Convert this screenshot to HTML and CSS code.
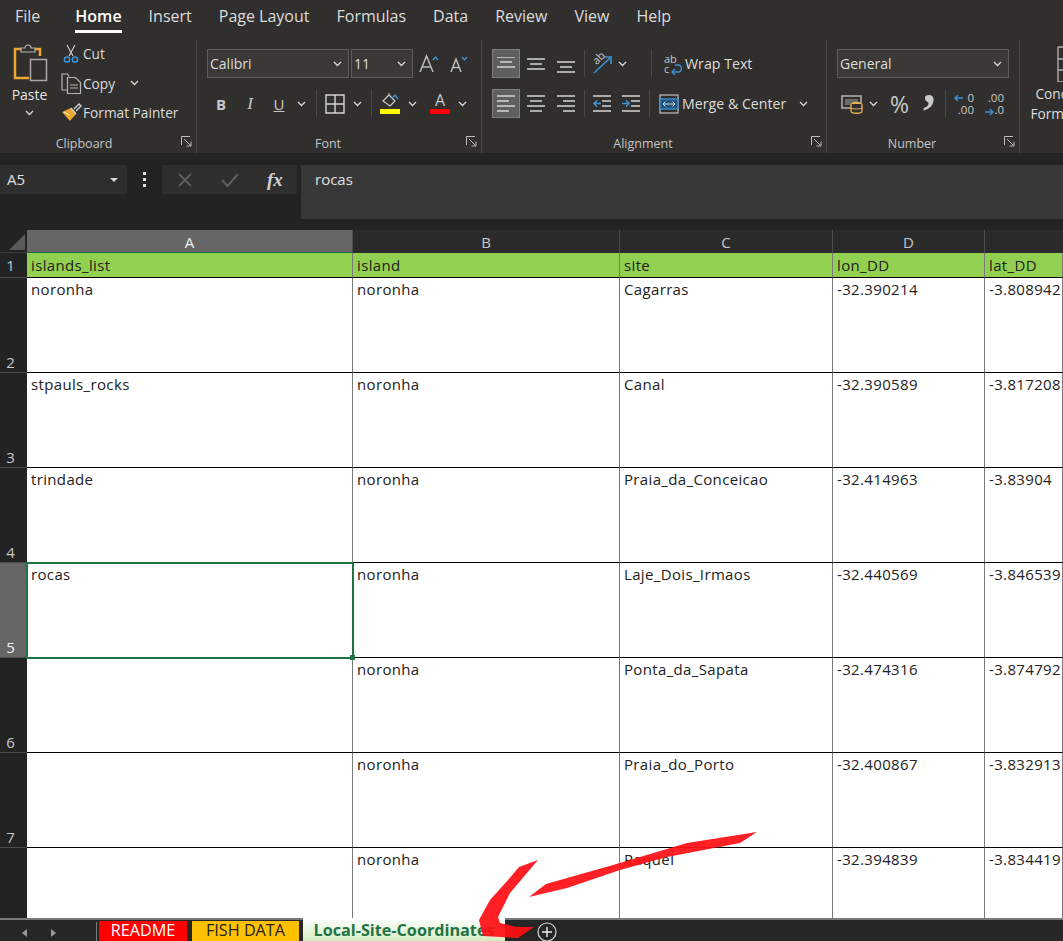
FILE: index.html
```html
<!DOCTYPE html>
<html lang="en">
<head>
    <meta charset="UTF-8">
    <title>Local-Site-Coordinates - Excel</title>
    <link rel="stylesheet" href="styles.css">
</head>
<body>
<svg class="sprite" width="0" height="0">
    <symbol id="chev" viewBox="0 0 9 6"><path d="M1 1l3.5 3.5L8 1" fill="none" stroke="#d8d8d8" stroke-width="1.3"/></symbol>
    <symbol id="launcher" viewBox="0 0 11 11"><path d="M.5 9V.5H9M3 3l6.5 6.5M5.5 10H10V5.500" fill="none" stroke="#bdbdbd" stroke-width="1"/></symbol>
</svg>

<div class="tabs">
    <span class="tab">File</span>
    <span class="tab tab-home">Home</span>
    <span class="tab">Insert</span>
    <span class="tab">Page Layout</span>
    <span class="tab">Formulas</span>
    <span class="tab">Data</span>
    <span class="tab">Review</span>
    <span class="tab">View</span>
    <span class="tab">Help</span>
</div>

<div class="ribbon">
    <div class="group group-clipboard">
        <div class="group-body clip-body">
            <div class="paste">
                <svg width="36" height="38" viewBox="0 0 36 38"><path d="M8 5H2v29h14" fill="none" stroke="#eda731" stroke-width="2.500"/><path d="M22 5h5v7" fill="none" stroke="#eda731" stroke-width="2.500"/><path d="M8 8V4h4a3 3 0 0 1 6 0h4v4z" fill="#302f2e" stroke="#b5b5b5" stroke-width="1.200"/><rect x="17.500" y="15.500" width="16" height="21" fill="#302f2e" stroke="#a8a8a8" stroke-width="1.500"/></svg>
                <span>Paste</span>
                <svg class="chev" width="9" height="6"><use href="#chev"/></svg>
            </div>
            <div class="clip-list">
                <div class="clip-item">
                    <span class="clip-icon"><svg width="16" height="20" viewBox="0 0 16 20"><path d="M4 1l6 11M12 1L6 12" stroke="#c8c8c8" stroke-width="1.200" fill="none"/><circle cx="4" cy="15.500" r="2.600" fill="none" stroke="#3d94d6" stroke-width="1.500"/><circle cx="12" cy="15.500" r="2.600" fill="none" stroke="#3d94d6" stroke-width="1.500"/></svg></span>
                    <span>Cut</span>
                </div>
                <div class="clip-item">
                    <span class="clip-icon"><svg width="21" height="21" viewBox="0 0 21 21"><path d="M8 3.500L6.500 1H1v16h5" fill="none" stroke="#b5b5b5" stroke-width="1.200"/><path d="M6.500 4.500h8l5 5v11h-13z" fill="#302f2e" stroke="#b5b5b5" stroke-width="1.200"/><path d="M9 12h8M9 15h8" stroke="#b5b5b5"/></svg></span>
                    <span>Copy</span>
                    <svg class="chev clip-chev" width="9" height="6"><use href="#chev"/></svg>
                </div>
                <div class="clip-item">
                    <span class="clip-icon"><svg width="21" height="19" viewBox="0 0 21 19"><path d="M1 9l9-4 5 6-6 7z" fill="#eda731"/><path d="M10 5l5 6M13 6l5-5 2 2-5 5" fill="none" stroke="#d5d5d5" stroke-width="1.300"/><path d="M3 9l5 3" stroke="#fff2cf"/></svg></span>
                    <span>Format Painter</span>
                </div>
            </div>
        </div>
        <div class="group-label">Clipboard<svg class="launcher" width="11" height="11"><use href="#launcher"/></svg></div>
    </div>

    <div class="group group-font">
        <div class="group-body">
            <div class="tool-row">
                <div class="select select-font">Calibri<svg class="chev" width="9" height="6"><use href="#chev"/></svg></div>
                <div class="select select-size">11<svg class="chev" width="9" height="6"><use href="#chev"/></svg></div>
                <svg class="grow" width="20" height="20" viewBox="0 0 20 20"><path d="M1 18L7.500 2 14 18M3.500 13h8" fill="none" stroke="#bdbdbd" stroke-width="1.500"/><path d="M14 6l2.500-3L19 6" fill="none" stroke="#3d94d6" stroke-width="1.400"/></svg>
                <svg class="shrink" width="18" height="18" viewBox="0 0 18 18"><path d="M1 17L6 4l5 13M3 12.500h6" fill="none" stroke="#bdbdbd" stroke-width="1.500"/><path d="M12 2l2.500 3L17 2" fill="none" stroke="#3d94d6" stroke-width="1.400"/></svg>
            </div>
            <div class="tool-row font-row2">
                <span class="glyph-b">B</span>
                <span class="glyph-i">I</span>
                <span class="glyph-u">U</span>
                <svg class="chev chev-u" width="9" height="6"><use href="#chev"/></svg>
                <i class="vsep sep-a"></i>
                <svg class="borders" width="20" height="20" viewBox="0 0 20 20"><path d="M1 1h18v18H1zM10 1v18M1 10h18" fill="none" stroke="#d5d5d5" stroke-width="1.400"/></svg>
                <svg class="chev chev-b" width="9" height="6"><use href="#chev"/></svg>
                <i class="vsep sep-b"></i>
                <span class="fill-btn">
                    <svg width="20" height="15" viewBox="0 0 20 15"><path d="M3 8l6-6 6 6-5 5z" fill="none" stroke="#c8c8c8" stroke-width="1.300"/><path d="M9 2V0" stroke="#c8c8c8"/><path d="M12 5l3-3 3 4" fill="none" stroke="#3d94d6" stroke-width="1.300"/></svg>
                    <i class="swatch swatch-yellow"></i>
                </span>
                <svg class="chev chev-f" width="9" height="6"><use href="#chev"/></svg>
                <span class="color-btn">
                    <span class="glyph-a">A</span>
                    <i class="swatch swatch-red"></i>
                </span>
                <svg class="chev chev-c" width="9" height="6"><use href="#chev"/></svg>
            </div>
        </div>
        <div class="group-label">Font<svg class="launcher" width="11" height="11"><use href="#launcher"/></svg></div>
    </div>

    <div class="group group-align">
        <div class="group-body">
            <div class="tool-row">
                <span class="align-btn active"><svg width="18" height="14" viewBox="0 0 18 14"><path d="M0 1h18M3 6h12M0 11h18" stroke="#d5d5d5" stroke-width="1.500" transform="translate(0 -1)"/></svg></span>
                <span class="align-btn"><svg width="18" height="14" viewBox="0 0 18 14"><path d="M0 2h18M3 7h12M0 12h18" stroke="#d5d5d5" stroke-width="1.500"/></svg></span>
                <span class="align-btn"><svg class="push-down" width="18" height="14" viewBox="0 0 18 14"><path d="M0 2h18M3 7h12M0 12h18" stroke="#d5d5d5" stroke-width="1.500"/></svg></span>
                <i class="vsep sep-c"></i>
                <span class="orient">
                    <span class="orient-text">ab</span>
                    <svg width="22" height="23" viewBox="0 0 22 23"><path d="M2 21L18 6" stroke="#3d94d6" stroke-width="1.600"/><path d="M12 5h7v7" fill="none" stroke="#3d94d6" stroke-width="1.600"/></svg>
                </span>
                <svg class="chev chev-o" width="9" height="6"><use href="#chev"/></svg>
                <i class="vsep sep-d"></i>
                <span class="wrap-icon">
                    <span class="wrap-letters">ab<br>c</span>
                    <svg width="12" height="14" viewBox="0 0 12 14"><path d="M2 10h6a3 3 0 0 0 0-7H5" fill="none" stroke="#3d94d6" stroke-width="1.500"/><path d="M5 7l-3 3 3 3" fill="none" stroke="#3d94d6" stroke-width="1.300"/></svg>
                </span>
                <span class="tool-text">Wrap Text</span>
            </div>
            <div class="tool-row align-row2">
                <span class="align-btn active"><svg width="18" height="17" viewBox="0 0 18 17"><path d="M0 1h18M0 6h12M0 11h18M0 16h12" stroke="#d5d5d5" stroke-width="1.500"/></svg></span>
                <span class="align-btn"><svg width="18" height="17" viewBox="0 0 18 17"><path d="M0 1h18M3 6h12M0 11h18M3 16h12" stroke="#d5d5d5" stroke-width="1.500"/></svg></span>
                <span class="align-btn"><svg width="18" height="17" viewBox="0 0 18 17"><path d="M0 1h18M6 6h12M0 11h18M6 16h12" stroke="#d5d5d5" stroke-width="1.500"/></svg></span>
                <i class="vsep sep-c"></i>
                <svg class="indent" width="18" height="17" viewBox="0 0 18 17"><path d="M0 1h18M9 6h9M9 11h9M0 16h18" stroke="#d5d5d5" stroke-width="1.400"/><path d="M8 8.500H1M4 5.500l-3 3 3 3" fill="none" stroke="#3d94d6" stroke-width="1.500"/></svg>
                <svg class="indent indent-b" width="18" height="17" viewBox="0 0 18 17"><path d="M0 1h18M9 6h9M9 11h9M0 16h18" stroke="#d5d5d5" stroke-width="1.400"/><path d="M0 8.500h7M4 5.500l3 3-3 3" fill="none" stroke="#3d94d6" stroke-width="1.500"/></svg>
                <i class="vsep sep-e"></i>
                <svg class="merge-icon" width="20" height="20" viewBox="0 0 20 20"><rect x="1" y="1" width="18" height="18" fill="none" stroke="#b5b5b5" stroke-width="1.300"/><rect x="1" y="5" width="18" height="10" fill="#24507a" stroke="#3d94d6" stroke-width="1.300"/><path d="M4 10h12M6.500 7.500L4 10l2.500 2.500M13.500 7.500L16 10l-2.500 2.500" fill="none" stroke="#cfe4f5"/></svg>
                <span class="tool-text">Merge &amp; Center</span>
                <svg class="chev chev-m" width="9" height="6"><use href="#chev"/></svg>
            </div>
        </div>
        <div class="group-label">Alignment<svg class="launcher" width="11" height="11"><use href="#launcher"/></svg></div>
    </div>

    <div class="group group-number">
        <div class="group-body">
            <div class="tool-row">
                <div class="select select-num">General<svg class="chev" width="9" height="6"><use href="#chev"/></svg></div>
            </div>
            <div class="tool-row num-row2">
                <svg class="money" width="22" height="20" viewBox="0 0 22 20"><rect x="1" y="2" width="19" height="12" fill="none" stroke="#b5b5b5" stroke-width="1.500"/><path d="M4 5h13v6H4z" fill="#6a6a6a"/><ellipse cx="15.500" cy="10" rx="5.500" ry="2.200" fill="#e8b454"/><path d="M10 10v7c0 3 11 3 11 0v-7" fill="#302f2e" stroke="#e8b454" stroke-width="1.300"/><path d="M10 13.500c0 2 11 2 11 0" fill="none" stroke="#e8b454"/></svg>
                <svg class="chev chev-n" width="9" height="6"><use href="#chev"/></svg>
                <span class="glyph-pct">%</span>
                <span class="glyph-comma">,</span>
                <i class="vsep sep-f"></i>
                <span class="dec-icon">
                    <span class="dec-line dec-end">0</span>
                    <span class="dec-line dec-end">.00</span>
                    <svg class="dec-arrow dec-arrow-top" width="10" height="8" viewBox="0 0 10 8"><path d="M9 4H1M4 1L1 4l3 3" fill="none" stroke="#3d94d6" stroke-width="1.400"/></svg>
                </span>
                <span class="dec-icon dec-b">
                    <span class="dec-line dec-end">.00</span>
                    <span class="dec-line dec-end">.0</span>
                    <svg class="dec-arrow dec-arrow-bottom" width="10" height="8" viewBox="0 0 10 8"><path d="M1 4h8M6 1l3 3-3 3" fill="none" stroke="#3d94d6" stroke-width="1.400"/></svg>
                </span>
            </div>
        </div>
        <div class="group-label">Number<svg class="launcher" width="11" height="11"><use href="#launcher"/></svg></div>
    </div>

    <div class="group group-styles">
        <svg class="cond-icon" width="20" height="36" viewBox="0 0 20 36"><path d="M1 1h19M1 1v35h19M1 13h19M1 24h19M10 1v35" fill="none" stroke="#b5b5b5" stroke-width="1.300"/></svg>
        <div class="cond-text">Conditional<br>Formatting<svg class="chev cond-chev" width="9" height="6"><use href="#chev"/></svg></div>
    </div>
</div>

<div class="formula-bar">
    <div class="name-box">A5<i class="caret"></i></div>
    <div class="dots"><i></i><i></i><i></i></div>
    <div class="fx-buttons">
        <svg width="16" height="16" viewBox="0 0 16 16"><path d="M2 2l12 12M14 2L2 14" stroke="#5e5e5e" stroke-width="1.800"/></svg>
        <svg width="18" height="16" viewBox="0 0 18 16"><path d="M1 8l5.500 6L17 2" fill="none" stroke="#5e5e5e" stroke-width="2"/></svg>
        <span class="fx">fx</span>
    </div>
    <div class="formula-input">rocas</div>
</div>

<div class="sheet">
    <div class="corner"><i></i></div>
    <div class="col-head col-on">A</div>
    <div class="col-head">B</div>
    <div class="col-head">C</div>
    <div class="col-head">D</div>
    <div class="col-head col-last"></div>

    <div class="row-head head-top">1</div>
    <div class="cell title">islands_list</div>
    <div class="cell title">island</div>
    <div class="cell title">site</div>
    <div class="cell title">lon_DD</div>
    <div class="cell title">lat_DD</div>

    <div class="row-head">2</div>
    <div class="cell">noronha</div>
    <div class="cell">noronha</div>
    <div class="cell">Cagarras</div>
    <div class="cell">-32.390214</div>
    <div class="cell">-3.808942</div>

    <div class="row-head">3</div>
    <div class="cell">stpauls_rocks</div>
    <div class="cell">noronha</div>
    <div class="cell">Canal</div>
    <div class="cell">-32.390589</div>
    <div class="cell">-3.817208</div>

    <div class="row-head">4</div>
    <div class="cell">trindade</div>
    <div class="cell">noronha</div>
    <div class="cell">Praia_da_Conceicao</div>
    <div class="cell">-32.414963</div>
    <div class="cell">-3.83904</div>

    <div class="row-head row-on">5</div>
    <div class="cell cell-on">rocas</div>
    <div class="cell">noronha</div>
    <div class="cell">Laje_Dois_Irmaos</div>
    <div class="cell">-32.440569</div>
    <div class="cell">-3.846539</div>

    <div class="row-head">6</div>
    <div class="cell"></div>
    <div class="cell">noronha</div>
    <div class="cell">Ponta_da_Sapata</div>
    <div class="cell">-32.474316</div>
    <div class="cell">-3.874792</div>

    <div class="row-head">7</div>
    <div class="cell"></div>
    <div class="cell">noronha</div>
    <div class="cell">Praia_do_Porto</div>
    <div class="cell">-32.400867</div>
    <div class="cell">-3.832913</div>

    <div class="row-head"></div>
    <div class="cell"></div>
    <div class="cell">noronha</div>
    <div class="cell">Raquel</div>
    <div class="cell">-32.394839</div>
    <div class="cell">-3.834419</div>
</div>

<div class="sheet-tabs">
    <div class="nav-arrows"><i class="arrow-left"></i><i class="arrow-right"></i></div>
    <div class="sheet-tab tab-red">README</div>
    <div class="sheet-tab tab-gold">FISH DATA</div>
    <div class="sheet-tab tab-active">Local-Site-Coordinates</div>
    <div class="add-sheet">
        <svg width="20" height="20" viewBox="0 0 20 20"><circle cx="10" cy="10" r="9" fill="none" stroke="#d5d5d5" stroke-width="1.200"/><path d="M10 5v10M5 10h10" stroke="#eee" stroke-width="1.400"/></svg>
    </div>
</div>

<!-- hand drawn annotation on top of the screenshot -->
<svg class="annotation" width="1063" height="941" viewBox="0 0 1063 941">
    <path d="M529 897L546 884 613 865 687 843 757 832 740 843 667 857 620 870 567 888z"/>
    <path d="M538 860L519 867 508 880 490 900 479 920 483 936 518 938 534 927 517 927 500 923 498 917 510 893z"/>
</svg>
</body>
</html>
```

FILE: styles.css
```css
* {
    box-sizing: border-box;
}
html, body {
    height: 100%;
}
body {
    margin: 0;
    background-color: #302f2e;
    color: #e4e4e4;
    font-family: "Open Sans", "Noto Sans", sans-serif;
    font-size: 14px;
    display: flex;
    flex-direction: column;
    overflow: hidden;
    position: relative;
}
.sprite {
    position: absolute;
}
.chev {
    flex: none;
}

/* ribbon tabs */
.tabs {
    height: 33px;
    display: flex;
    gap: 27px;
    padding-left: 15px;
    flex: none;
}
.tab {
    font-size: 16px;
    line-height: 32px;
    color: #dcdcdc;
    white-space: nowrap;
}
.tab-home {
    margin-left: 8px;
    font-weight: 600;
    color: #fff;
    height: 33px;
    border-bottom: 3px solid #fff;
}

/* ribbon */
.ribbon {
    height: 120px;
    display: flex;
    flex: none;
}
.group {
    display: flex;
    flex-direction: column;
    border-right: 1px solid #484746;
    margin-top: 7px;
    flex: none;
    position: relative;
}
.group-clipboard { width: 197px; }
.group-font { width: 285px; padding-left: 10px; }
.group-align { width: 345px; padding-left: 10px; }
.group-number { width: 193px; padding-left: 10px; }
.group-styles { flex: 1; border-right: none; }
.group-body {
    flex: 1;
    padding-top: 9px;
}
.group-label {
    height: 20px;
    line-height: 22px;
    font-size: 12.5px;
    text-align: center;
    color: #c4c4c4;
    padding-right: 28px;
    position: relative;
}
.group-font .group-label,
.group-align .group-label,
.group-number .group-label {
    padding-right: 32px;
}
.launcher {
    position: absolute;
    right: 4px;
    top: 3px;
}
.clip-body {
    display: flex;
    padding-top: 4px;
}
.paste {
    width: 59px;
    display: flex;
    flex-direction: column;
    align-items: center;
}
.paste svg:first-child {
    margin-left: 3px;
}
.paste span {
    margin-top: 3px;
    line-height: 20px;
}
.paste .chev {
    margin-top: 5px;
}
.clip-list {
    display: flex;
    flex-direction: column;
    margin-top: -5px;
}
.clip-item {
    height: 29.500px;
    display: flex;
    align-items: center;
    white-space: nowrap;
    color: #dcdcdc;
    font-size: 13.7px;
}
.clip-icon {
    width: 24px;
    display: flex;
    justify-content: center;
}
.clip-chev {
    margin-left: 15px;
}

.tool-row {
    display: flex;
    align-items: center;
    height: 29px;
}
.font-row2, .align-row2, .num-row2 {
    margin-top: 11px;
}
.select {
    height: 29px;
    border: 1px solid #5c5c5c;
    background-color: #3a3938;
    color: #dcdcdc;
    padding: 0 6px 0 2px;
    display: flex;
    align-items: center;
    justify-content: space-between;
    font-size: 14px;
}
.select-font { width: 142px; }
.select-size { width: 62px; margin-left: 2px; }
.select-num { width: 172px; }
.grow { margin-left: 6px; }
.shrink { margin-left: 11px; }

.font-row2 span, .glyph-pct, .glyph-comma {
    color: #c8c8c8;
}
.glyph-b, .glyph-i, .glyph-u {
    width: 20px;
    text-align: center;
    font-size: 15px;
    line-height: 20px;
}
.glyph-b { font-weight: 700; margin-left: 4px; }
.glyph-i { font-style: italic; margin-left: 9px; font-family: "Liberation Serif", serif; font-size: 17px; }
.glyph-u { text-decoration: underline; margin-left: 9px; }
.chev-u { margin-left: 8px; }
.vsep {
    width: 1px;
    height: 27px;
    background-color: #484746;
    flex: none;
}
.sep-a { margin-left: 10px; }
.borders { margin-left: 8px; }
.chev-b { margin-left: 8px; }
.sep-b { margin-left: 9px; }
.fill-btn, .color-btn {
    display: flex;
    flex-direction: column;
    align-items: center;
    width: 20px;
    flex: none;
}
.fill-btn { margin-left: 8px; }
.chev-f { margin-left: 8px; }
.color-btn { margin-left: 13px; }
.chev-c { margin-left: 8px; }
.glyph-a {
    font-size: 16px;
    line-height: 15px;
}
.swatch {
    display: block;
    width: 20px;
    height: 5px;
    margin-top: 1px;
}
.swatch-yellow { background-color: #ffff00; }
.swatch-red { background-color: #ff0000; }

.align-btn {
    width: 28px;
    height: 29px;
    margin-right: 2px;
    display: flex;
    align-items: center;
    justify-content: center;
    flex: none;
}
.align-btn.active {
    background-color: #5f5f5f;
    border: 1px solid #7d7d7d;
}
.push-down { margin-top: 6px; }
.sep-c { margin-left: 2px; }
.orient {
    margin-left: 7px;
    width: 22px;
    height: 23px;
    position: relative;
    flex: none;
}
.orient-text {
    position: absolute;
    left: 0;
    top: 0;
    font-size: 11px;
    line-height: 12px;
    color: #c8c8c8;
    transform: rotate(-45deg);
}
.chev-o { margin-left: 4px; }
.sep-d { margin-left: 24px; }
.wrap-icon {
    margin-left: 12px;
    width: 18px;
    height: 24px;
    position: relative;
    flex: none;
}
.wrap-letters {
    display: block;
    font-size: 11px;
    line-height: 10px;
    padding-top: 2px;
    color: #c8c8c8;
}
.wrap-icon svg {
    position: absolute;
    right: 0;
    bottom: 0;
}
.tool-text {
    margin-left: 3px;
    font-size: 14.2px;
    color: #dcdcdc;
    white-space: nowrap;
}
.indent { margin-left: 8px; }
.indent-b { margin-left: 11px; }
.sep-e { margin-left: 9px; }
.merge-icon { margin-left: 9px; }
.chev-m { margin-left: 13px; }

.money { margin-left: 4px; }
.chev-n { margin-left: 6px; }
.glyph-pct {
    margin-left: 12px;
    font-size: 23px;
    line-height: 24px;
}
.glyph-comma {
    align-self: flex-start;
    margin: -4px 0 0 14px;
    width: 14px;
    height: 29px;
    font-family: "Liberation Serif", serif;
    font-size: 50px;
    font-weight: 700;
    line-height: 0;
}
.sep-f { margin-left: 8px; }
.dec-icon {
    margin-left: 8px;
    width: 20px;
    height: 24px;
    display: flex;
    flex-direction: column;
    align-items: flex-end;
    position: relative;
    flex: none;
}
.dec-b { margin-left: 10px; }
.dec-line {
    font-size: 11.5px;
    line-height: 12px;
    color: #c8c8c8;
}
.dec-arrow {
    position: absolute;
    left: 0;
}
.dec-arrow-top { top: 2px; }
.dec-arrow-bottom { bottom: 0; }
.group-styles {
    padding-left: 10px;
    white-space: nowrap;
    overflow: hidden;
}
.cond-icon {
    position: absolute;
    left: 37px;
    top: 6px;
}
.cond-text {
    margin-top: 44px;
    line-height: 20px;
    text-align: center;
    width: 84px;
    color: #dcdcdc;
    font-size: 13.7px;
}
.cond-chev {
    margin-left: 4px;
}

/* formula bar */
.formula-bar {
    height: 77px;
    background-color: #232323;
    display: flex;
    align-items: flex-start;
    padding-top: 12px;
    flex: none;
    font-size: 15px;
}
.name-box {
    width: 127px;
    height: 29px;
    background-color: #2e2e2e;
    color: #e0e0e0;
    padding-left: 7px;
    line-height: 29px;
    position: relative;
}
.caret {
    position: absolute;
    right: 9px;
    top: 13px;
    border-left: 4px solid transparent;
    border-right: 4px solid transparent;
    border-top: 4px solid #d8d8d8;
}
.dots {
    width: 35px;
    height: 29px;
    display: flex;
    flex-direction: column;
    align-items: center;
    justify-content: center;
    gap: 3px;
}
.dots i {
    width: 3px;
    height: 3px;
    background-color: #e0e0e0;
}
.fx-buttons {
    width: 135px;
    height: 29px;
    background-color: #2e2e2e;
    display: flex;
    align-items: center;
    padding-left: 15px;
    gap: 28px;
}
.fx {
    font-family: "Liberation Serif", serif;
    font-style: italic;
    font-weight: 700;
    font-size: 19px;
    color: #d0d0d0;
}
.formula-input {
    margin-left: 4px;
    flex: 1;
    height: 54px;
    background-color: #383838;
    color: #e0e0e0;
    padding-left: 14px;
    line-height: 29px;
}

/* worksheet */
.sheet {
    flex: 1;
    min-height: 0;
    overflow: hidden;
    display: grid;
    grid-template-columns: 27px 326px 267px 213px 152px 1fr;
    grid-template-rows: 23px 25px repeat(7, 95px);
    background-color: #fff;
    color: #222;
}
.corner {
    background-color: #232323;
    position: relative;
    border-bottom: 1px solid #3a3a3a;
}
.corner i {
    position: absolute;
    right: 2px;
    bottom: 2px;
    border-left: 16px solid transparent;
    border-bottom: 16px solid #5a5a5a;
}
.col-head {
    background-color: #2b2b2b;
    color: #c8c8c8;
    text-align: center;
    font-size: 15px;
    line-height: 24px;
    border-right: 1px solid #4c4c4c;
}
.col-on {
    background-color: #666;
    color: #f0f0f0;
    border-bottom: 1px solid #217346;
}
.col-last {
    border-right: none;
}
.row-head {
    background-color: #232323;
    color: #c8c8c8;
    font-size: 15px;
    text-align: center;
    display: flex;
    align-items: flex-end;
    justify-content: center;
    padding-right: 6px;
    border-bottom: 1px solid #4c4c4c;
    line-height: 20px;
}
.head-top {
    align-items: center;
}
.row-on {
    background-color: #666;
    color: #f0f0f0;
}
.cell {
    padding: 1px 0 0 4px;
    border-right: 1px solid #7a7a7a;
    border-bottom: 1px solid #000;
    font-size: 15px;
    letter-spacing: 0.35px;
    line-height: 20px;
    white-space: nowrap;
    overflow: hidden;
}
.title {
    background-color: #92d050;
    padding-top: 2px;
}
.cell-on {
    position: relative;
    overflow: visible;
    outline: 2px solid #217346;
    outline-offset: -1px;
    z-index: 1;
}
.cell-on::after {
    content: "";
    position: absolute;
    right: -3px;
    bottom: -3px;
    width: 5px;
    height: 5px;
    background-color: #217346;
}

/* sheet tabs */
.sheet-tabs {
    height: 23px;
    flex: none;
    background-color: #262626;
    border-top: 2px solid #7a7a7a;
    display: flex;
    position: relative;
    z-index: 2;
}
.nav-arrows {
    width: 97px;
    display: flex;
    gap: 24px;
    padding: 7px 0 0 22px;
    border-right: 1px solid #7a7a7a;
    margin-top: 2px;
}
.arrow-left, .arrow-right {
    width: 0;
    height: 0;
    border-top: 4px solid transparent;
    border-bottom: 4px solid transparent;
}
.arrow-left { border-right: 5px solid #999; }
.arrow-right { border-left: 5px solid #999; }
.sheet-tab {
    font-size: 16.2px;
    text-align: center;
    line-height: 18px;
    margin-top: 1px;
    white-space: nowrap;
}
.tab-red {
    width: 88px;
    margin-left: 2px;
    background-color: #ff0000;
    color: #fff;
}
.tab-gold {
    width: 107px;
    margin-left: 5px;
    background-color: #ffc000;
    color: #222;
}
.tab-active {
    width: 202px;
    margin-left: 4px;
    margin-top: -2px;
    padding-top: 2px;
    line-height: 20px;
    font-weight: 700;
    color: #217346;
    background: linear-gradient(#ffffff, #d4ecbf);
}
.add-sheet {
    margin: 2px 0 0 32px;
}

.annotation {
    position: absolute;
    left: 0;
    top: 0;
    z-index: 3;
    pointer-events: none;
}
.annotation path {
    fill: #ff0f14;
    opacity: 0.93;
}
```
